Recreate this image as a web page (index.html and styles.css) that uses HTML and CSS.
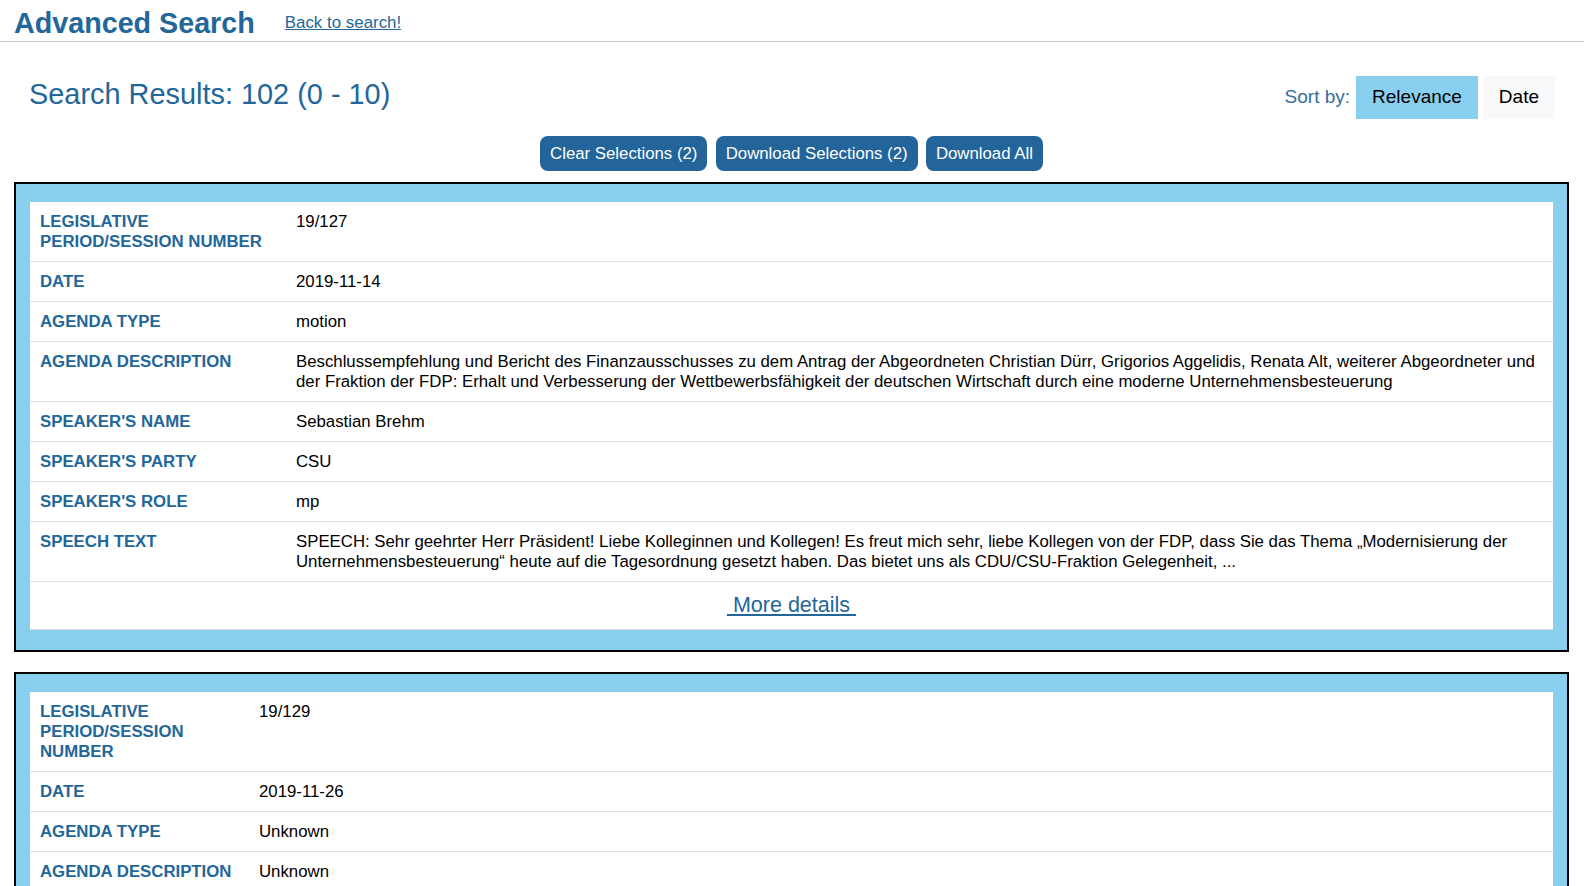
FILE: index.html
```html
<!DOCTYPE html>
<html lang="en">
<head>
<meta charset="utf-8">
<title>Advanced Search</title>
<link rel="stylesheet" href="styles.css">
</head>
<body>
<header class="topbar">
  <h1 class="title">Advanced Search</h1>
  <a class="back-link" href="#">Back to search!</a>
</header>

<main class="main">
  <div class="results-row">
    <h2 class="results-count">Search Results: 102 (0 - 10)</h2>
    <div class="sort">
      <span class="sort-label">Sort by:</span>
      <button class="sort-btn sort-btn-active">Relevance</button>
      <button class="sort-btn">Date</button>
    </div>
  </div>

  <div class="actions">
    <button class="action-btn">Clear Selections (2)</button>
    <button class="action-btn">Download Selections (2)</button>
    <button class="action-btn">Download All</button>
  </div>

  <section class="card card-wide">
    <table class="result">
      <colgroup><col class="col-label"><col></colgroup>
      <tr><th>Legislative Period/Session Number</th><td>19/127</td></tr>
      <tr><th>Date</th><td>2019-11-14</td></tr>
      <tr><th>Agenda Type</th><td>motion</td></tr>
      <tr><th>Agenda Description</th><td>Beschlussempfehlung und Bericht des Finanzausschusses zu dem Antrag der Abgeordneten Christian Dürr, Grigorios Aggelidis, Renata Alt, weiterer Abgeordneter und der Fraktion der FDP: Erhalt und Verbesserung der Wettbewerbsfähigkeit der deutschen Wirtschaft durch eine moderne Unternehmensbesteuerung</td></tr>
      <tr><th>Speaker's Name</th><td>Sebastian Brehm</td></tr>
      <tr><th>Speaker's Party</th><td>CSU</td></tr>
      <tr><th>Speaker's Role</th><td>mp</td></tr>
      <tr><th>Speech Text</th><td>SPEECH: Sehr geehrter Herr Präsident! Liebe Kolleginnen und Kollegen! Es freut mich sehr, liebe Kollegen von der FDP, dass Sie das Thema „Modernisierung der Unternehmensbesteuerung“ heute auf die Tagesordnung gesetzt haben. Das bietet uns als CDU/CSU-Fraktion Gelegenheit, ...</td></tr>
      <tr><td class="details-cell" colspan="2"><a class="details-link" href="#">&nbsp;More details&nbsp;</a></td></tr>
    </table>
  </section>

  <section class="card card-narrow">
    <table class="result">
      <colgroup><col class="col-label"><col></colgroup>
      <tr><th>Legislative Period/Session Number</th><td>19/129</td></tr>
      <tr><th>Date</th><td>2019-11-26</td></tr>
      <tr><th>Agenda Type</th><td>Unknown</td></tr>
      <tr><th>Agenda Description</th><td>Unknown</td></tr>
    </table>
  </section>
</main>
</body>
</html>
```

FILE: styles.css
```css
* { box-sizing: border-box; }

html, body {
  margin: 0;
  padding: 0;
  background: #fff;
}

body {
  font-family: "Liberation Sans", Arial, sans-serif;
  font-size: 16.8px;
  color: #000;
  width: 1584px;
}

.topbar {
  display: flex;
  align-items: flex-start;
  height: 42px;
  padding-left: 14px;
  border-bottom: 1px solid #c8c8c8;
}

.title {
  margin: 7px 0 0 0;
  font-size: 28.7px;
  line-height: 32px;
  font-weight: bold;
  color: #23669a;
}

.back-link {
  margin: 12.5px 0 0 30px;
  font-size: 16.9px;
  line-height: 20px;
  color: #23669a;
  text-decoration: underline;
}

.main {
  margin: 0 15px 0 14px;
}

.results-row {
  display: flex;
  align-items: center;
  justify-content: space-between;
  margin-top: 33.5px;
  height: 43.5px;
  padding: 0 14px 0 15px;
}

.results-count {
  margin: 0 0 7px 0;
  font-size: 28.9px;
  line-height: 36px;
  font-weight: normal;
  color: #23669a;
}

.sort {
  display: flex;
  align-items: center;
  height: 100%;
}

.sort-label {
  font-size: 19px;
  line-height: 22px;
  color: #336e9e;
  margin-right: 6px;
}

.sort-btn {
  height: 43.5px;
  padding: 0 16px;
  border: none;
  border-radius: 0;
  font-family: inherit;
  font-size: 19px;
  color: #000;
  background: #f8f9fa;
}

.sort-btn + .sort-btn {
  margin-left: 5px;
}

.sort-btn-active {
  background: #89cff0;
}

.actions {
  display: flex;
  justify-content: center;
  gap: 8.3px;
  margin-top: 17px;
}

.action-btn {
  height: 35px;
  padding: 0 10px;
  border: none;
  border-radius: 8px;
  background: #23659a;
  color: #fff;
  font-family: inherit;
  font-size: 16.8px;
  line-height: 20px;
}

.card {
  border: 2px solid #000;
  background: #89cff0;
  padding: 18px 14px 20px;
  margin-top: 11px;
}

.card + .card {
  margin-top: 20px;
}

.result {
  width: 100%;
  border-collapse: collapse;
  table-layout: fixed;
  background: #fff;
}

.card-wide .col-label { width: 256px; }
.card-narrow .col-label { width: 219px; }

.result th,
.result td {
  padding: 10px 10px 9px;
  line-height: 20px;
  text-align: left;
  vertical-align: top;
  border-bottom: 1px solid #dee2e6;
}

.result th {
  font-weight: bold;
  text-transform: uppercase;
  color: #23669a;
}

.result td {
  font-weight: normal;
  color: #000;
}

.result .details-cell {
  text-align: center;
  line-height: 26px;
}

.details-link {
  font-size: 21.5px;
  color: #23669a;
  text-decoration: underline;
}
```
